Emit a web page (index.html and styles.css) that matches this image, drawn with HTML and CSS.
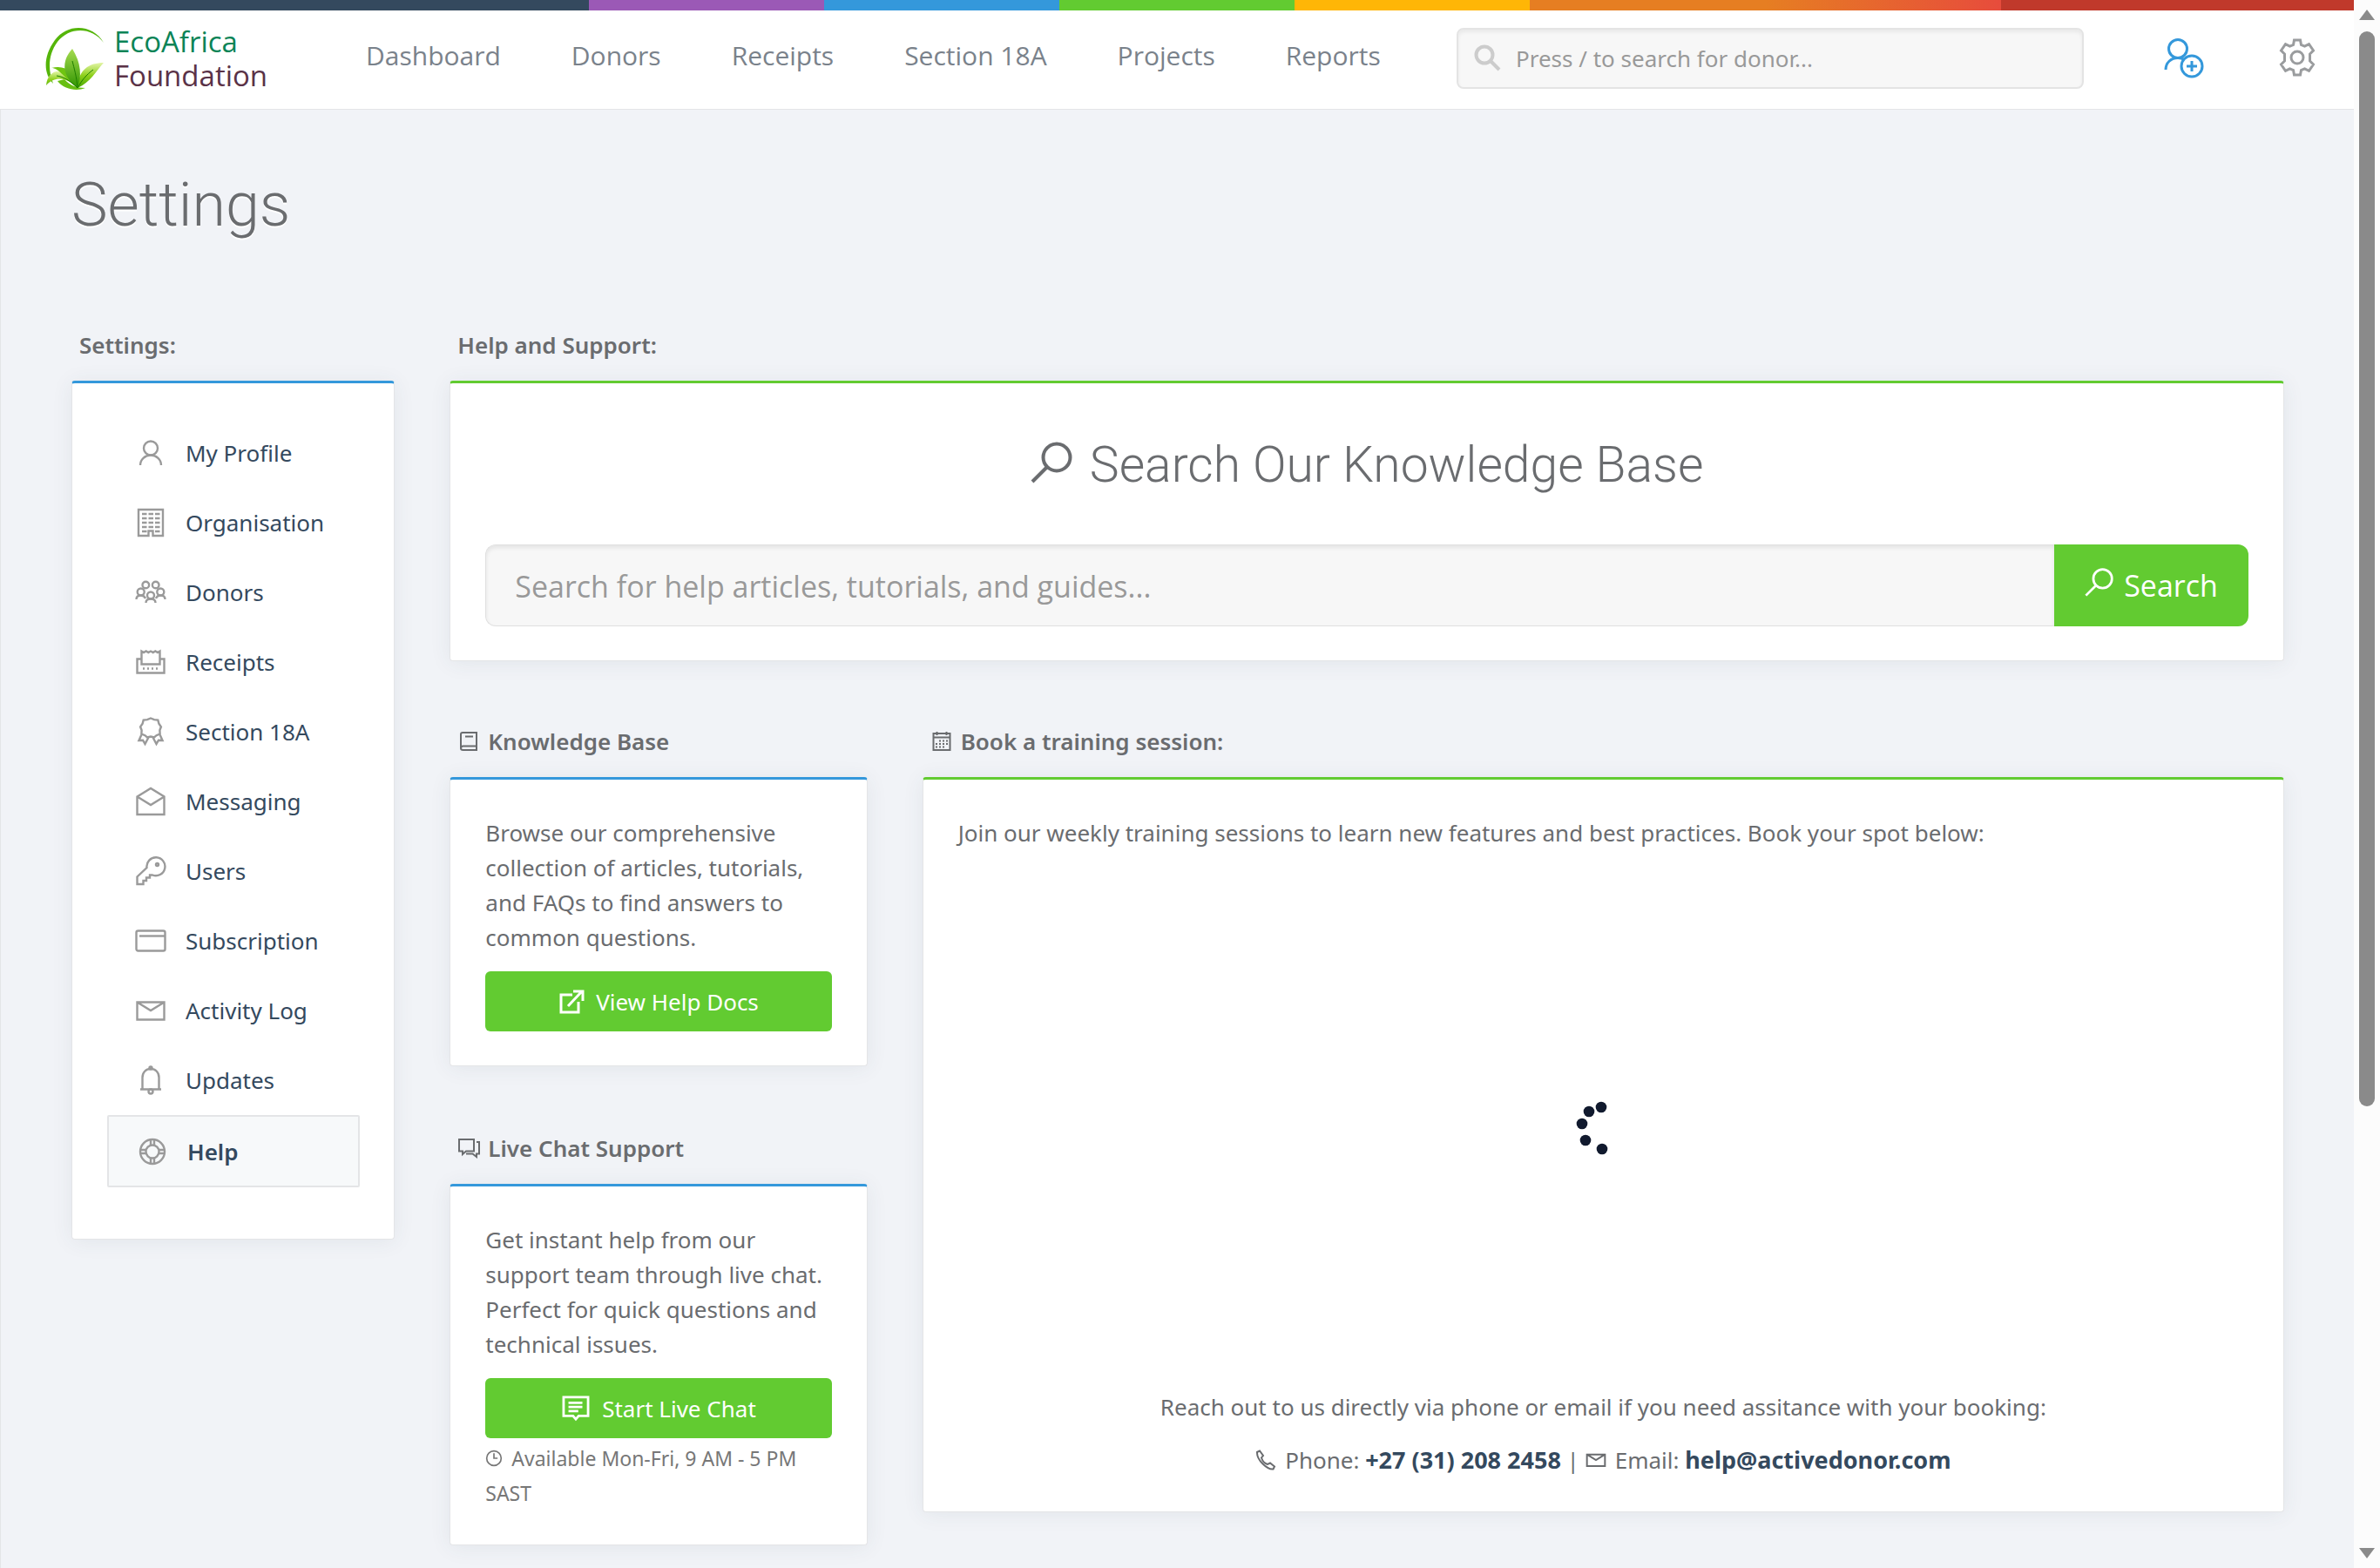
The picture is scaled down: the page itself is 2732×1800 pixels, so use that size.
FILE: index.html
```html
<!DOCTYPE html>
<html lang="en">
<head>
<meta charset="utf-8">
<title>Settings - Help and Support</title>
<meta name="viewport" content="width=device-width, initial-scale=1">
<link rel="stylesheet" href="styles.css">
</head>
<body>
<svg class="sprite" aria-hidden="true">
  <defs>
    <linearGradient id="leaf" x1="0" y1="0" x2="0" y2="1"><stop offset="0" stop-color="#a6dc50"/><stop offset="1" stop-color="#2f9400"/></linearGradient>
    <linearGradient id="leaf-side" x1="0" y1="0" x2="0" y2="1"><stop offset="0" stop-color="#e4f5a8"/><stop offset=".5" stop-color="#8ed01c"/><stop offset="1" stop-color="#49a900"/></linearGradient>
  </defs>
  <symbol id="i-user" viewBox="0 0 36 36"><circle cx="18" cy="12.500" r="8"/><path d="M6 32c0-6.500 5.500-11.500 12-11.500s12 5 12 11.500"/></symbol>
  <symbol id="i-building" viewBox="0 0 36 36"><path d="M15.500 33H4V3h28v30H20.500v-5.500h-5V33zM8 8h5.500M15.500 8H21M23 8h5.500M8 13h5.500M15.500 13H21M23 13h5.500M8 18h5.500M15.500 18H21M23 18h5.500M8 23h5.500M15.500 23H21M23 23h5.500M8 28h5.500M23 28h5.500"/></symbol>
  <symbol id="i-group" viewBox="0 0 36 36"><circle cx="12.300" cy="9.500" r="3.800"/><circle cx="23.700" cy="9.500" r="3.800"/><circle cx="6.700" cy="17.500" r="4"/><circle cx="29.300" cy="17.500" r="4"/><circle cx="18" cy="21.500" r="4"/><path d="M1.500 26c0-3 2-4.500 5.200-4.500s4.300 1 5.300 3.500M34.500 26c0-3-2-4.500-5.200-4.500s-4.300 1-5.300 3.500M12.500 30c0-3 2-4.500 5.500-4.500s5.500 1.500 5.500 4.500"/></symbol>
  <symbol id="i-receipt" viewBox="0 0 36 36"><path d="M7.500 14.500H2.500v16h31v-16h-5M7.500 5.500v15h21v-15l-2.500 1.500-2.700-1.500-2.600 1.500-2.700-1.500-2.700 1.500-2.600-1.500-2.700 1.500z"/><path d="M9 25.500h2M14 25.500h2M19 25.500h2M24 25.500h2"/></symbol>
  <symbol id="i-ribbon" viewBox="0 0 36 36"><path d="M18 2.500l4 1.600 4.300.5 1.100 4.100 2.500 3.600-1.500 3.900.2 4.300-4 1.700-2.600 2.300-4-.9-4 .9-2.600-2.300-4-1.700.2-4.300-1.500-3.900 2.500-3.600 1.100-4.100 4.300-.5zM7.600 21L4.500 28l4.500-.3 2.500 4.300 4-7.500M28.400 21l3.100 7-4.500-.3-2.500 4.300-4-7.500"/></symbol>
  <symbol id="i-mail-open" viewBox="0 0 36 36"><path d="M2.500 12.500L18 3l15.500 9.500V33h-31zM2.500 12.500L18 22l15.500-9.500"/></symbol>
  <symbol id="i-key" viewBox="0 0 36 36"><path d="M2.500 33v-8.500l11-10.500a10.500 10.500 0 1 1 6.500 8.500h-3v3h-4v3.500H9.500V33z"/><circle cx="25.500" cy="10.500" r="1.500"/></symbol>
  <symbol id="i-card" viewBox="0 0 36 36"><rect x="1.500" y="6.500" width="33" height="23" rx="2"/><path d="M5 12.500h29"/></symbol>
  <symbol id="i-mail" viewBox="0 0 36 36"><path d="M2.500 8.500h31v20h-31zM2.500 8.500L18 18l15.500-9.500"/></symbol>
  <symbol id="i-bell" viewBox="0 0 36 36"><path d="M8.500 28V15c0-6 4-10 9.500-10s9.500 4 9.500 10v13M6 28.500h24"/><circle cx="18" cy="4" r="1.500"/><circle cx="18" cy="31" r="2.500"/></symbol>
  <symbol id="i-lifebuoy" viewBox="0 0 36 36"><circle cx="18" cy="18" r="14"/><circle cx="18" cy="18" r="7.500"/><path d="M16 4v7M20 4v7M16 25v7M20 25v7M4 16h7M4 20h7M25 16h7M25 20h7"/></symbol>
  <symbol id="i-search" viewBox="0 0 48 48"><circle cx="30" cy="18" r="15.500"/><path d="M19 29L2 46"/></symbol>
  <symbol id="i-lens" viewBox="0 0 32 32"><circle cx="12" cy="12" r="9.500"/><path d="M19 19l10 10"/></symbol>
  <symbol id="i-user-add" viewBox="0 0 46 46"><circle cx="16" cy="12" r="10.500"/><path d="M2 36c0-8 6-13.500 14-13.500 3 0 5.500.8 7.500 2"/><circle cx="32" cy="32" r="12"/><path d="M32 26v12M26 32h12"/></symbol>
  <symbol id="i-gear" viewBox="0 0 44 44"><path d="M18.500 2h7l1 5.500 4 1.700 5-2.500 5 7.300-4 4v8l4 4-5 7.300-5-2.500-4 1.700-1 5.500h-7l-1-5.500-4-1.700-5 2.500-5-7.300 4-4v-8l-4-4 5-7.300 5 2.500 4-1.700z"/><circle cx="22" cy="22" r="7"/></symbol>
  <symbol id="i-book" viewBox="0 0 24 24"><path d="M21 17V2H5C3.500 2 3 3 3 4v16c0 1.500 1 2 2.500 2H21v-4.500H5.500C4 17.500 3 18.500 3 20M8 6.500h9"/></symbol>
  <symbol id="i-calendar" viewBox="0 0 24 24"><path d="M2.500 3h19v19h-19zM2.500 7.500h19M6.500 1v4M17.500 1v4"/><path d="M9 11.500h2M13 11.500h2M17 11.500h2M5 15h2M9 15h2M13 15h2M17 15h2M5 18.500h2M9 18.500h2M13 18.500h2"/></symbol>
  <symbol id="i-chats" viewBox="0 0 26 24"><path d="M2 2h17v13.500h-9L6 19v-3.500H2zM22 5h3v13.500h-3V22l-4.500-3.500H10"/></symbol>
  <symbol id="i-clock" viewBox="0 0 24 24"><circle cx="12" cy="12" r="10"/><path d="M12 5v7h5"/></symbol>
  <symbol id="i-phone" viewBox="0 0 24 24"><path d="M2 3l3-1.500 4 5.500-2 2.500c1 3 4 6.500 7 7.500l3-1.500 5 4-1.500 3C14 23.500 1.500 12 2 3z"/></symbol>
  <symbol id="i-external" viewBox="0 0 30 30"><path d="M16 7H3v20h20V15M11 20L27 3M17 3h11v11"/></symbol>
  <symbol id="i-comment" viewBox="0 0 34 32"><path d="M2 2h30v23H20.500L17 29l-3.500-4H2zM8 9h17M8 14h17M8 19h12"/></symbol>
</svg>

<div class="page">
  <div class="rainbow"></div>
  <header class="topbar">
    <a class="brand" href="#">
      <svg class="brand-mark" viewBox="0 0 68 74" aria-hidden="true">
        <path d="M67 19C55-2 26-4 11 16-3 35-2 55 9 66 3 50 3 33 14 18 27 1 53 0 67 19z" fill="#55b50a"/>
        <path d="M14 63c8 10 22 12 32 8-10 0-18-3-24-10z" fill="#68bf12"/>
        <path d="M37 71C27 61 13 55 1 68 3 48 24 44 37 71z" fill="url(#leaf-side)"/>
        <path d="M37 71C21 58 15 48 7 48 24 44 33 53 37 71z" fill="#6fc411"/>
        <path d="M37 71C38 50 50 42 67 42 58 52 52 64 37 71z" fill="url(#leaf-side)"/>
        <path d="M37 71C19 58 18 40 31 26 41 42 42 57 37 71z" fill="url(#leaf)"/>
        <path d="M37 71C36 58 33 48 31 40M37 71C29 63 21 58 13 57M37 71C42 62 47 56 55 50" fill="none" stroke="#1f7d00"/>
      </svg>
      <span class="brand-name"><span class="brand-eco">EcoAfrica</span> <span class="brand-foundation">Foundation</span></span>
    </a>
    <nav class="mainnav" aria-label="Main">
      <a href="#">Dashboard</a><a href="#">Donors</a><a href="#">Receipts</a><a href="#">Section 18A</a><a href="#">Projects</a><a href="#">Reports</a>
    </nav>
    <label class="donor-search">
      <svg class="icon lens" aria-hidden="true"><use href="#i-lens"/></svg>
      <input type="search" placeholder="Press / to search for donor..." aria-label="Search for donor">
    </label>
    <button class="tool tool-add" type="button" aria-label="Add donor"><svg class="icon"><use href="#i-user-add"/></svg></button>
    <button class="tool" type="button" aria-label="Settings"><svg class="icon"><use href="#i-gear"/></svg></button>
  </header>

  <main class="content">
    <h1>Settings</h1>
    <div class="columns">
      <aside class="sidebar">
        <h2 class="label">Settings:</h2>
        <nav class="card card-blue menu" aria-label="Settings">
          <ul>
            <li><a href="#"><svg class="icon"><use href="#i-user"/></svg>My Profile</a></li>
            <li><a href="#"><svg class="icon"><use href="#i-building"/></svg>Organisation</a></li>
            <li><a href="#"><svg class="icon"><use href="#i-group"/></svg>Donors</a></li>
            <li><a href="#"><svg class="icon"><use href="#i-receipt"/></svg>Receipts</a></li>
            <li><a href="#"><svg class="icon"><use href="#i-ribbon"/></svg>Section 18A</a></li>
            <li><a href="#"><svg class="icon"><use href="#i-mail-open"/></svg>Messaging</a></li>
            <li><a href="#"><svg class="icon"><use href="#i-key"/></svg>Users</a></li>
            <li><a href="#"><svg class="icon"><use href="#i-card"/></svg>Subscription</a></li>
            <li><a href="#"><svg class="icon"><use href="#i-mail"/></svg>Activity Log</a></li>
            <li><a href="#"><svg class="icon"><use href="#i-bell"/></svg>Updates</a></li>
            <li><a class="current" href="#" aria-current="page"><svg class="icon"><use href="#i-lifebuoy"/></svg>Help</a></li>
          </ul>
        </nav>
      </aside>

      <div class="help">
        <section>
          <h2 class="label">Help and Support:</h2>
          <div class="card card-green">
            <h3 class="kb-title"><svg class="icon" aria-hidden="true"><use href="#i-search"/></svg>Search Our Knowledge Base</h3>
            <form class="kb-form">
              <input type="text" placeholder="Search for help articles, tutorials, and guides..." aria-label="Search the knowledge base">
              <button type="button"><svg class="icon" aria-hidden="true"><use href="#i-search"/></svg>Search</button>
            </form>
          </div>
        </section>

        <div class="split">
          <div class="stack">
            <section>
              <h2 class="label"><svg class="icon" aria-hidden="true"><use href="#i-book"/></svg>Knowledge Base</h2>
              <div class="card card-blue">
                <p>Browse our comprehensive collection of articles, tutorials, and FAQs to find answers to common questions.</p>
                <a class="button" href="#"><svg class="icon icon-external" aria-hidden="true"><use href="#i-external"/></svg>View Help Docs</a>
              </div>
            </section>
            <section>
              <h2 class="label"><svg class="icon" aria-hidden="true"><use href="#i-chats"/></svg>Live Chat Support</h2>
              <div class="card card-blue">
                <p>Get instant help from our support team through live chat. Perfect for quick questions and technical issues.</p>
                <button class="button" type="button"><svg class="icon icon-comment" aria-hidden="true"><use href="#i-comment"/></svg>Start Live Chat</button>
                <small><svg class="icon" aria-hidden="true"><use href="#i-clock"/></svg>Available Mon-Fri, 9 AM - 5 PM SAST</small>
              </div>
            </section>
          </div>

          <section>
            <h2 class="label"><svg class="icon" aria-hidden="true"><use href="#i-calendar"/></svg>Book a training session:</h2>
            <div class="card card-green">
              <p>Join our weekly training sessions to learn new features and best practices. Book your spot below:</p>
              <div class="booking" role="status" aria-label="Loading">
                <svg class="spinner" viewBox="0 0 66 66"><circle cx="31" cy="9" r="6.300"/><circle cx="17" cy="14" r="6.300"/><circle cx="9" cy="28" r="6.300"/><circle cx="13" cy="47" r="6.300"/><circle cx="32" cy="57" r="6.300"/></svg>
              </div>
              <div class="contact">
                <p>Reach out to us directly via phone or email if you need assitance with your booking:</p>
                <p><svg class="icon" aria-hidden="true"><use href="#i-phone"/></svg>Phone: <a href="tel:+27312082458">+27 (31) 208 2458</a> | <svg class="icon icon-mail" aria-hidden="true"><use href="#i-mail"/></svg>Email: <a href="mailto:help@activedonor.com">help@activedonor.com</a></p>
              </div>
            </div>
          </section>
        </div>
      </div>
    </div>
  </main>
</div>

<div class="scrollbar" aria-hidden="true">
  <svg viewBox="0 0 20 14"><path d="M10 1L19 13H1z"/></svg>
  <div class="track"><div class="thumb"></div></div>
  <svg viewBox="0 0 20 14"><path d="M10 13L19 1H1z"/></svg>
</div>
</body>
</html>
```
FILE: styles.css
```css
* { box-sizing: border-box; }

body {
  margin: 0;
  display: grid;
  grid-template-columns: minmax(0, 1fr) 30px;
  align-items: start;
  background: #f1f3f7;
  color: #6a6c6f;
  font: 26px/40px "Noto Sans", "Open Sans", sans-serif;
}

h1, h2, h3, p, ul { margin: 0; padding: 0; }
ul { list-style: none; }
a { text-decoration: none; }
button, input { font: inherit; }
input::placeholder { color: #999; opacity: 1; }

.sprite { position: absolute; width: 0; height: 0; }

.icon {
  flex: none;
  fill: none;
  stroke: currentColor;
  stroke-width: 2;
}

.page { min-height: 100vh; }

.rainbow {
  height: 12px;
  background: linear-gradient(to right,
    #34495e 25%, #9b59b6 25%, #9b59b6 35%, #3498db 35%, #3498db 45%,
    #62cb31 45%, #62cb31 55%, #ffb606 55%, #ffb606 65%,
    #e67e22 65%, #e67e22 75%, #e74c3c 85%, #c0392b 85%);
}

/* Header */
.topbar {
  display: flex;
  align-items: center;
  height: 114px;
  padding: 0 43px 4px 52px;
  background: #fff;
  border-bottom: 1px solid #e4e5e7;
  font-family: "Open Sans", "Noto Sans", sans-serif;
}

.brand { display: flex; align-items: center; gap: 11px; width: 368px; }
.brand-mark { width: 68px; height: 74px; }
.brand-name { width: 180px; font-size: 33px; line-height: 39px; }
.brand-eco { color: #0b8457; }
.brand-foundation { color: #5a3247; }

.mainnav { display: flex; gap: 81px; padding-bottom: 6px; font-size: 30px; }
.mainnav a { color: #7a828b; white-space: nowrap; }

.donor-search {
  flex: 0 1 720px;
  display: flex;
  align-items: center;
  gap: 16px;
  height: 70px;
  margin-left: auto;
  margin-right: 92px;
  padding: 0 18px;
  background: #f7f7f7;
  border: 2px solid #e4e4e4;
  border-radius: 8px;
  box-shadow: inset 0 3px 4px rgba(0, 0, 0, .06);
}
.donor-search input { flex: 1; min-width: 0; border: 0; padding: 0; background: none; font-family: "Noto Sans", sans-serif; }
.lens { width: 32px; height: 32px; stroke-width: 4; color: #ccc; }

.tool { border: 0; padding: 0; background: none; color: #9a9c9e; height: 46px; }
.tool .icon { width: 44px; height: 44px; stroke-width: 3; }
.tool-add { margin-right: 85px; color: #3498db; }
.tool-add .icon { width: 46px; height: 46px; }

/* Content */
.content {
  padding: 69px 80px 26px 81px;
  border-left: 1px solid #e4e5e7;
}

h1 {
  margin-bottom: 101px;
  font: 300 70px/80px Roboto, sans-serif;
  text-shadow: 0 2px 0 #fff;
}

.columns { display: grid; grid-template-columns: 371fr 2104fr; gap: 63px; align-items: start; }
.split { display: grid; grid-template-columns: 479fr 1562fr; gap: 63px; align-items: start; margin-top: 72px; }
.stack { display: grid; gap: 74px; }

.label {
  display: flex;
  align-items: center;
  gap: 9px;
  margin-bottom: 21px;
  padding-left: 9px;
  font-size: 26px;
  line-height: 40px;
  font-weight: 600;
}
.label .icon { width: 26px; height: 24px; }

.card {
  padding: 41px 40px 39px;
  background: #fff;
  border: 1px solid #e4e5e7;
  border-top: 3px solid #3498db;
  border-radius: 4px;
  box-shadow: 0 2px 24px rgba(52, 73, 94, .08);
}
.card-green { border-top-color: #62cb31; }

.menu { padding: 40px 39px 59px 40px; }
.menu a {
  display: flex;
  align-items: center;
  gap: 22px;
  height: 80px;
  padding-left: 32px;
  color: #34495e;
}
.menu .icon { width: 36px; height: 36px; color: #9a9a9a; stroke-width: 2.4; }
.menu .current {
  height: 83px;
  background: #f7f9fa;
  border: 2px solid #e4e5e7;
  border-radius: 2px;
  font-weight: 600;
}

.kb-title {
  display: flex;
  justify-content: center;
  align-items: center;
  gap: 20px;
  margin: 13px 0 51px;
  font: 300 57px/80px Roboto, sans-serif;
}
.kb-title .icon { width: 48px; height: 48px; margin-bottom: 6px; stroke-width: 4; }

.kb-form { display: flex; font-size: 34px; font-family: "Open Sans", "Noto Sans", sans-serif; }
.kb-form input {
  flex: 1;
  min-width: 0;
  height: 94px;
  padding: 2px 33px 0;
  background: #f7f7f7;
  border: 1px solid #e0e0e0;
  border-right: 0;
  border-radius: 12px 0 0 12px;
  box-shadow: inset 0 3px 5px rgba(0, 0, 0, .08);
}
.kb-form button {
  display: flex;
  justify-content: center;
  align-items: center;
  gap: 12px;
  width: 223px;
  border: 0;
  border-radius: 0 12px 12px 0;
  background: #62cb31;
  color: #fff;
}
.kb-form .icon { width: 33px; height: 33px; margin-bottom: 8px; stroke-width: 4; }

.button {
  display: flex;
  justify-content: center;
  align-items: center;
  gap: 13px;
  width: 100%;
  height: 69px;
  margin-top: 19px;
  padding-top: 1px;
  border: 0;
  border-radius: 6px;
  background: #62cb31;
  color: #fff;
}
.button .icon { height: 30px; stroke-width: 3; }
.icon-external { width: 30px; }
.icon-comment { width: 34px; }

small { display: block; padding-top: 3px; font-size: 23px; color: #777; }
small .icon { width: 20px; height: 20px; margin-right: 10px; vertical-align: -1px; }

.booking { display: grid; place-items: center; height: 619px; padding-top: 18px; }
.spinner { width: 66px; height: 66px; fill: #111a2e; }

.contact { text-align: center; }
.contact p + p { margin-top: 21px; }
.contact a { color: #34495e; font-size: 27px; font-weight: 700; }
.contact .icon { width: 24px; height: 24px; margin-right: 10px; vertical-align: -2px; }
.contact .icon-mail { stroke-width: 3; }

/* Scroll rail beside the page */
.scrollbar {
  position: sticky;
  top: 0;
  display: flex;
  flex-direction: column;
  align-items: center;
  gap: 12px;
  height: 100vh;
  padding: 10px 0;
  background: #fcfcfc;
}
.scrollbar svg { width: 20px; height: 14px; fill: #8a8a8a; }
.track { flex: 1; width: 18px; }
.thumb { height: 71.4%; border-radius: 9px; background: #8a8a8a; }
```
